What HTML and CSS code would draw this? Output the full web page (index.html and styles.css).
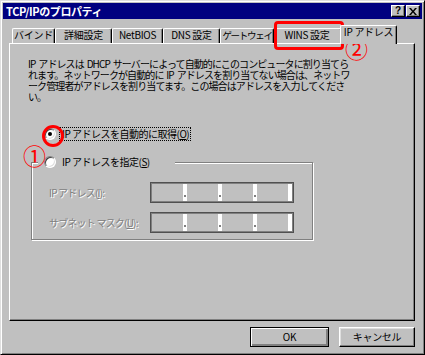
FILE: index.html
```html
<!DOCTYPE html>
<html lang="ja">
<head>
<meta charset="utf-8">
<title>TCP/IPのプロパティ</title>
<link rel="stylesheet" href="styles.css">
</head>
<body>
<div class="window">
  <div class="titlebar">
    <span class="title">TCP/IPのプロパティ</span>
    <div class="tbtns">
      <span class="tbtn help">?</span>
      <span class="tbtn close"><svg width="8" height="7" viewBox="0 0 8 7"><path d="M0 0h2l2 2.4L6 0h2L5 3.5 8 7H6L4 4.6 2 7H0l3-3.5z" fill="#000"/></svg></span>
    </div>
  </div>
  <div class="tabs">
    <div class="tab t1">バインド</div>
    <div class="tab t2">詳細設定</div>
    <div class="tab t3">NetBIOS</div>
    <div class="tab t4">DNS 設定</div>
    <div class="tab t5">ゲートウェイ</div>
    <div class="tab t6">WINS 設定</div>
    <div class="tab sel">IP アドレス</div>
  </div>
  <div class="panel">
    <p class="desc">IP アドレスは DHCP サーバーによって自動的にこのコンピュータに割り当てら<br>れます。ネットワークが自動的に IP アドレスを割り当てない場合は、ネットワ<br>ーク管理者がアドレスを割り当てます。この場合はアドレスを入力してくださ<br>い。</p>
    <div class="radio-row">
      <span class="radio checked"></span>
      <span class="rlabel focus">IP アドレスを自動的に取得(<u>O</u>)</span>
    </div>
    <div class="group">
      <div class="legend">
        <span class="radio"></span>
        <span class="rlabel">IP アドレスを指定(<u>S</u>)</span>
      </div>
      <div class="field-row first">
        <span class="flabel">IP アドレス(<u>I</u>):</span>
        <div class="ipbox"><span class="seg"></span><span class="sep dot"></span><span class="seg"></span><span class="sep dot"></span><span class="seg"></span><span class="sep dot"></span><span class="seg"></span><span class="sep"></span></div>
      </div>
      <div class="field-row second">
        <span class="flabel">サブネット マスク(<u>U</u>):</span>
        <div class="ipbox"><span class="seg"></span><span class="sep dot"></span><span class="seg"></span><span class="sep dot"></span><span class="seg"></span><span class="sep dot"></span><span class="seg"></span><span class="sep"></span></div>
      </div>
    </div>
  </div>
  <div class="buttons">
    <button class="btn default">OK</button>
    <button class="btn cancel">キャンセル</button>
  </div>
  <div class="mark ring"></div>
  <div class="mark box"></div>
  <div class="mark num num1">①</div>
  <div class="mark num num2">②</div>
</div>
</body>
</html>
```
FILE: styles.css
```css
* { box-sizing: border-box; }
html, body { margin: 0; padding: 0; }
body {
  width: 425px;
  height: 355px;
  background: #c0c0c0;
  font-family: "Noto Sans CJK JP", sans-serif;
  font-size: 10px;
  color: #000;
  overflow: hidden;
}
.window {
  position: relative;
  width: 425px;
  height: 355px;
  background: #c0c0c0;
  border: 1px solid;
  border-color: #dfdfdf #000 #000 #dfdfdf;
  box-shadow: inset 1px 1px 0 #fff, inset -1px -1px 0 #808080;
  padding: 2px;
  display: flex;
  flex-direction: column;
}
.titlebar {
  height: 16px;
  background: #000080;
  display: flex;
  align-items: center;
  padding: 0 2px 0 3px;
}
.title {
  color: #fff;
  font-weight: bold;
  font-size: 11px;
  line-height: 14px;
  letter-spacing: -0.4px;
}
.tbtns {
  margin-left: auto;
  display: flex;
  gap: 1px;
}
.tbtn {
  width: 14px;
  height: 12px;
  background: #c0c0c0;
  border: 1px solid;
  border-color: #fff #000 #000 #fff;
  box-shadow: inset -1px -1px 0 #808080;
  display: flex;
  align-items: center;
  justify-content: center;
  font-family: "Liberation Sans", sans-serif;
  font-weight: bold;
  font-size: 10px;
  line-height: 10px;
}
.tabs {
  display: flex;
  align-items: flex-end;
  height: 18px;
  margin-top: 6px;
  padding-left: 9px;
}
.tab {
  height: 15px;
  border-top: 1px solid #fff;
  border-left: 1px solid #fff;
  border-right: 1px solid #000;
  box-shadow: inset -1px 0 0 #808080;
  border-radius: 2px 2px 0 0;
  text-align: center;
  line-height: 12px;
  font-size: 10px;
  letter-spacing: -0.3px;
  white-space: nowrap;
  background: #c0c0c0;
}
.t1 { width: 43px; }
.t2 { width: 57px; }
.t3 { width: 51px; }
.t4 { width: 57px; }
.t5 { width: 54px; font-size: 9.5px; letter-spacing: -1.3px; }
.t6 { width: 68px; padding-right: 2px; }
.tab.sel {
  position: relative;
  z-index: 2;
  width: 57px;
  height: 19px;
  margin: 0 -2px -1px -2px;
}
.panel {
  margin: 0 7px 0 6px;
  height: 278px;
  border: 1px solid;
  border-color: #fff #000 #000 #fff;
  box-shadow: inset -1px -1px 0 #808080;
  padding-top: 14px;
}
.desc {
  margin: 0;
  padding-left: 18px;
  line-height: 11px;
  font-size: 10px;
  letter-spacing: -0.9px;
  word-spacing: 1.5px;
  white-space: nowrap;
}
.radio-row {
  display: flex;
  align-items: center;
  height: 13px;
  margin: 25px 0 0 34px;
}
.radio {
  width: 12px;
  height: 12px;
  border-radius: 50%;
  border: 1px solid;
  border-color: #808080 #fff #fff #808080;
  box-shadow: inset 1px 1px 0 #404040, inset -1px -1px 0 #dfdfdf;
  background: #fff;
  flex: none;
  display: flex;
  align-items: center;
  justify-content: center;
}
.radio.checked::after {
  content: "";
  width: 4px;
  height: 4px;
  border-radius: 50%;
  background: #000;
}
.rlabel {
  margin-left: 4px;
  padding: 0 1px 0 2px;
  line-height: 12px;
  letter-spacing: -0.5px;
  white-space: nowrap;
}
.rlabel.focus {
  outline: 1px dotted #000;
}
.group {
  margin: 22px 0 0 21px;
  width: 282px;
  border: 1px solid #808080;
  box-shadow: 1px 1px 0 #fff, inset 1px 1px 0 #fff;
  padding: 0 0 6px 17px;
}
.legend {
  display: flex;
  align-items: center;
  height: 13px;
  width: 137px;
  margin: -8px 0 0 -11px;
  padding-left: 6px;
  background: #c0c0c0;
}
.field-row {
  display: flex;
  align-items: center;
  height: 21px;
}
.field-row.first { margin-top: 14px; }
.field-row.second { margin-top: 9px; }
.flabel {
  width: 101px;
  color: #808080;
  text-shadow: 1px 1px 0 #fff;
  letter-spacing: -0.8px;
  white-space: nowrap;
}
.ipbox {
  width: 144px;
  height: 21px;
  border: 1px solid #505050;
  box-shadow: inset 1px 1px 0 #808080, inset -1px -1px 0 #808080;
  padding: 1px;
  display: flex;
  background: #c0c0c0;
}
.seg { width: 31px; height: 100%; }
.sep {
  width: 4px;
  height: 100%;
  background: #fff;
  position: relative;
}
.sep.dot::after {
  content: "";
  position: absolute;
  left: 1px;
  top: 11px;
  width: 2px;
  height: 2px;
  background: #808080;
}
.buttons {
  display: flex;
  justify-content: flex-end;
  gap: 10px;
  margin-top: 6px;
  padding-right: 7px;
}
.btn {
  height: 20px;
  padding: 0;
  margin: 0;
  background: #c0c0c0;
  font-family: "Noto Sans CJK JP", sans-serif;
  font-size: 10px;
  line-height: 16px;
  color: #000;
  border: 1px solid;
  border-color: #fff #000 #000 #fff;
  box-shadow: inset -1px -1px 0 #808080, inset 1px 1px 0 #dfdfdf;
  letter-spacing: -0.3px;
}
.btn.default {
  width: 79px;
  border-color: #000;
  box-shadow: inset 1px 1px 0 #fff, inset -1px -1px 0 #808080, inset -2px -2px 0 #808080;
}
.btn.cancel { width: 76px; }
.mark { position: absolute; pointer-events: none; }
.ring {
  left: 41px;
  top: 124px;
  width: 22px;
  height: 22px;
  border: 3px solid #f00;
  border-radius: 50%;
}
.box {
  left: 273px;
  top: 20px;
  width: 70px;
  height: 29px;
  border: 3px solid #f00;
  border-radius: 4px;
}
.num {
  color: #f00;
  font-family: "Noto Sans CJK JP", sans-serif;
  font-size: 23px;
  line-height: 23px;
}
.num1 { left: 22px; top: 143px; }
.num2 { left: 344px; top: 36px; }
```
